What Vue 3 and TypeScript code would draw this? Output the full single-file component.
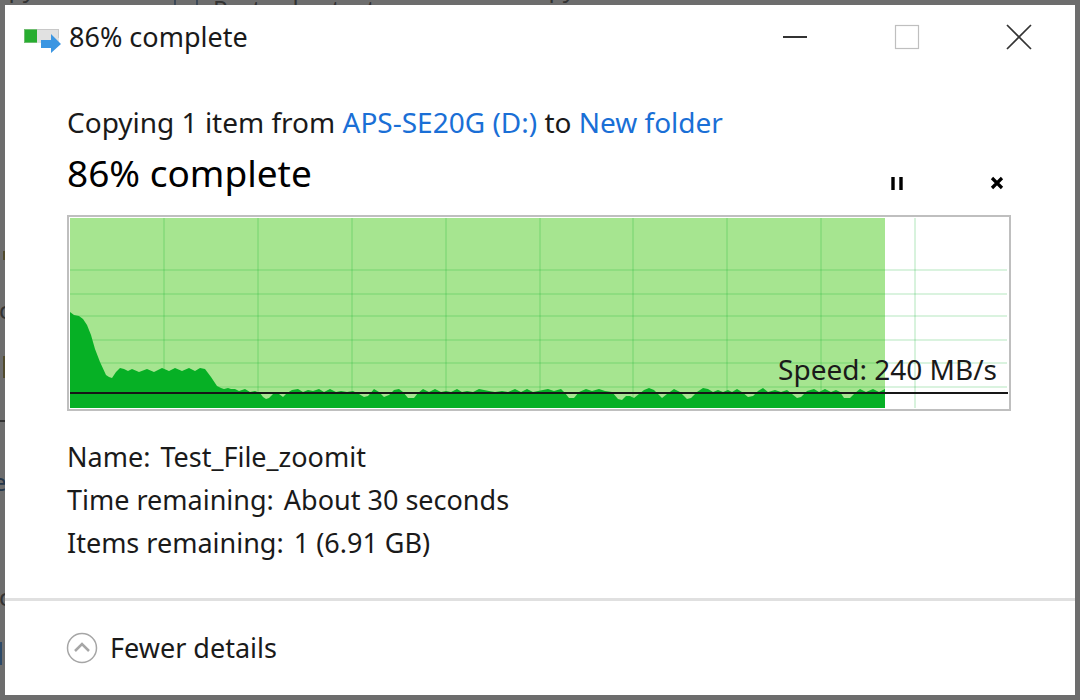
<script setup lang="ts">
import { ref } from 'vue'

interface Detail {
  label: string
  value: string
}

const progress = ref(86)
const speed = ref('240 MB/s')
const paused = ref(false)

const details: Detail[] = [
  { label: 'Name:', value: 'Test_File_zoomit' },
  { label: 'Time remaining:', value: 'About 30 seconds' },
  { label: 'Items remaining:', value: '1 (6.91 GB)' },
]

const columns = [94, 188, 282, 376, 470, 563, 657, 751, 845]
const rows = [52, 76, 98, 122, 145, 169]

// Transfer rate samples, as x and y inside the 938 x 190 plot
const samples: [number, number][] = [
  [0, 94], [4, 97], [9, 98], [13, 101], [17, 107], [21, 117], [25, 131], [30, 144],
  [36, 157], [39, 159], [42, 160], [46, 154], [50, 150], [54, 151], [58, 153], [62, 151],
  [69, 154], [77, 151], [84, 154], [92, 150], [99, 153], [105, 150], [112, 153], [119, 150],
  [125, 153], [130, 150], [135, 151], [141, 159], [147, 168], [151, 170], [154, 171], [158, 170],
  [161, 171], [165, 171], [169, 173], [175, 171], [180, 174], [185, 173], [190, 175], [193, 179],
  [196, 181], [199, 180], [204, 175], [209, 176], [213, 179], [217, 175], [222, 172], [228, 171],
  [233, 174], [238, 172], [243, 173], [249, 171], [254, 174], [260, 171], [266, 174], [271, 173],
  [277, 174], [283, 173], [289, 176], [294, 179], [298, 178], [304, 171], [309, 174], [314, 179],
  [319, 177], [324, 172], [329, 171], [333, 174], [338, 180], [344, 180], [348, 175], [353, 171],
  [359, 174], [365, 171], [371, 174], [376, 173], [381, 174], [387, 171], [392, 174], [397, 173],
  [403, 174], [409, 171], [419, 173], [425, 174], [432, 173], [438, 174], [445, 171], [451, 174],
  [457, 171], [463, 174], [468, 173], [478, 171], [484, 173], [491, 171], [495, 175], [499, 180],
  [504, 180], [509, 174], [516, 171], [522, 173], [529, 171], [535, 173], [542, 174], [548, 181],
  [552, 182], [556, 178], [560, 178], [564, 180], [569, 176], [574, 172], [579, 170], [584, 172],
  [588, 176], [592, 180], [597, 176], [604, 171], [610, 174], [617, 181], [621, 180], [627, 174],
  [633, 170], [638, 171], [643, 174], [648, 172], [653, 174], [658, 172], [662, 174], [667, 171],
  [672, 174], [678, 179], [683, 178], [688, 173], [693, 170], [698, 174], [705, 172], [711, 174],
  [717, 172], [722, 176], [727, 180], [731, 179], [737, 173], [744, 171], [749, 174], [755, 171],
  [761, 174], [766, 172], [770, 174], [774, 180], [780, 180], [785, 175], [790, 171], [796, 174],
  [803, 171], [809, 174], [815, 171],
]

const area = `M0 190L${samples.map(([x, y]) => `${x} ${y}`).join('L')}L815 190Z`
</script>

<template>
  <div class="desktop">
    <div class="behind" aria-hidden="true">
      <span class="peek top copy-a">opy</span>
      <span class="peek top copy-b">opy</span>
      <span class="peek top paste">Paste shortcut</span>
      <span class="peek top clip"></span>
      <span class="mark olive dot"></span>
      <span class="peek side first">c</span>
      <span class="mark olive bar"></span>
      <span class="mark dash"></span>
      <span class="peek side second">e</span>
      <span class="peek side third">c</span>
      <span class="mark blue"></span>
    </div>

    <main class="window">
      <header class="titlebar">
        <svg class="app-icon" width="38" height="32" viewBox="0 -7 38 32" aria-hidden="true">
          <rect x="13" y="1" width="22" height="14" fill="#e1e1e1" />
          <path d="M13 1.500H35M34.500 1V10" fill="none" stroke="#c8c8c8" />
          <rect x="0" y="1" width="13" height="14" fill="#27ad30" />
          <path d="M0 1.500H13M.5 1V15M0 14.500H13" fill="none" stroke="#6fbd70" />
          <path d="M17 12H27V6L37 16L27 25V20H17Z" fill="#3b96e2" />
        </svg>
        <h1 class="title">{{ progress }}% complete</h1>
        <div class="controls">
          <button type="button" aria-label="Minimize">
            <svg width="26" height="26" viewBox="0 0 26 26"><path d="M1 13H25" stroke="#333" stroke-width="2" /></svg>
          </button>
          <button type="button" aria-label="Maximize" disabled>
            <svg width="26" height="26" viewBox="0 0 26 26"><rect x="1.500" y="1.500" width="23" height="23" fill="none" stroke="#bfbfbf" stroke-width="1.200" /></svg>
          </button>
          <button type="button" aria-label="Close">
            <svg width="26" height="26" viewBox="0 0 26 26"><path d="M1 1L25 25M25 1L1 25" stroke="#333" stroke-width="1.700" /></svg>
          </button>
        </div>
      </header>

      <section class="content">
        <p class="summary">
          Copying 1 item from <a href="#source">APS-SE20G (D:)</a> to <a href="#target">New folder</a>
        </p>
        <div class="status">
          <h2>{{ progress }}% complete</h2>
          <div class="actions">
            <button type="button" aria-label="Pause" :aria-pressed="paused" @click="paused = !paused">
              <svg width="14" height="14" viewBox="0 0 14 14"><path d="M3 1V14M11 1V14" stroke="#000" stroke-width="3.400" /></svg>
            </button>
            <button type="button" aria-label="Cancel">
              <svg width="14" height="14" viewBox="0 0 14 14"><path d="M2 2L12 12M12 2L2 12" stroke="#000" stroke-width="3.200" /></svg>
            </button>
          </div>
        </div>

        <div class="chart">
          <svg class="plot" viewBox="0 0 938 190" preserveAspectRatio="none" role="img" aria-label="Transfer speed">
            <rect width="815" height="190" fill="#a6e590" />
            <g stroke="#09b026" stroke-opacity=".2" stroke-width="1.600">
              <path v-for="x in columns" :key="`c${x}`" :d="`M${x} 0V190`" />
              <path v-for="y in rows" :key="`r${y}`" :d="`M0 ${y}H937`" />
            </g>
            <path :d="area" fill="#06b025" />
            <path d="M0 175H938" stroke="#161616" stroke-width="1.800" />
          </svg>
          <span class="speed">Speed: {{ speed }}</span>
        </div>

        <dl class="details">
          <div v-for="d in details" :key="d.label">
            <dt>{{ d.label }}</dt>
            <dd>{{ d.value }}</dd>
          </div>
        </dl>
      </section>

      <footer class="footer">
        <button type="button" class="toggle">
          <svg width="32" height="32" viewBox="0 0 32 32" aria-hidden="true">
            <circle cx="16" cy="16" r="14.500" fill="none" stroke="#a6a6a6" stroke-width="1.500" />
            <path d="M9 19L16 12L23 19" fill="none" stroke="#a6a6a6" stroke-width="2.500" />
          </svg>
          <span>Fewer details</span>
        </button>
      </footer>
    </main>
  </div>
</template>

<style>
body {
  margin: 0;
}
</style>

<style scoped>
.desktop {
  position: relative;
  box-sizing: border-box;
  min-height: 100vh;
  padding: 5px;
  display: flex;
  overflow: hidden;
  background: #6d6d6d;
  color: #1a1a1a;
  font-family: "Noto Sans", "Open Sans", sans-serif;
  font-size: 28px;
  line-height: 36px;
}

.behind {
  position: absolute;
  inset: 0;
  color: #333;
}

.peek,
.mark {
  position: absolute;
}

.peek {
  font-size: 24px;
  line-height: 32px;
}

.copy-a {
  left: -6px;
  top: -28px;
}

.copy-b {
  left: 534px;
  top: -28px;
}

.paste {
  left: 213px;
  top: -7px;
}

.clip {
  left: 174px;
  top: 0;
  width: 20px;
  height: 8px;
  border: 2px solid #3d4a58;
  border-width: 0 2px;
}

.side {
  left: -1px;
}

.first {
  top: 294px;
}

.second {
  left: -7px;
  top: 466px;
  color: #25374b;
}

.third {
  top: 581px;
}

.olive {
  left: 3px;
  width: 4px;
  background: #514b2d;
}

.dot {
  top: 251px;
  height: 9px;
}

.bar {
  top: 356px;
  height: 22px;
}

.dash {
  left: 0;
  top: 420px;
  width: 6px;
  height: 2px;
  background: #333;
}

.blue {
  left: 0;
  top: 642px;
  width: 2px;
  height: 23px;
  background: #2d4a68;
}

.window {
  position: relative;
  flex: 1;
  display: flex;
  flex-direction: column;
  background: #fff;
}

button {
  padding: 0;
  border: 0;
  background: none;
  color: inherit;
  font: inherit;
  display: flex;
  align-items: center;
  justify-content: center;
}

h1,
h2,
p,
dl,
dd {
  margin: 0;
  font-weight: 400;
}

.titlebar {
  height: 64px;
  padding-left: 19px;
  display: flex;
  align-items: center;
  gap: 7px;
}

.title {
  flex: 1;
  font-size: 27px;
}

.controls {
  display: flex;
}

.controls button {
  width: 112px;
  height: 62px;
}

.content {
  flex: 1;
  padding: 35px 64px 0 62px;
}

.summary a {
  color: #1a6fd6;
  text-decoration: none;
}

.status {
  height: 75px;
  display: flex;
  justify-content: space-between;
}

h2 {
  font-size: 37px;
  line-height: 66px;
  color: #000;
}

.actions {
  display: flex;
  gap: 72px;
  align-items: flex-end;
  padding-bottom: 12px;
}

.actions button {
  width: 28px;
  height: 40px;
}

.chart {
  position: relative;
  padding: 1px;
  border: 2px solid #bfbfbf;
}

.plot {
  display: block;
  width: 100%;
  height: 190px;
}

.speed {
  position: absolute;
  right: 12px;
  bottom: 22px;
}

.details {
  padding-top: 24px;
  font-size: 27px;
}

.details div {
  display: flex;
  gap: 10px;
  line-height: 43px;
}

.footer {
  height: 94px;
  padding-left: 61px;
  border-top: 3px solid #e0e0e0;
  display: flex;
  align-items: center;
}

.toggle {
  gap: 12px;
  font-size: 27px;
}
</style>
